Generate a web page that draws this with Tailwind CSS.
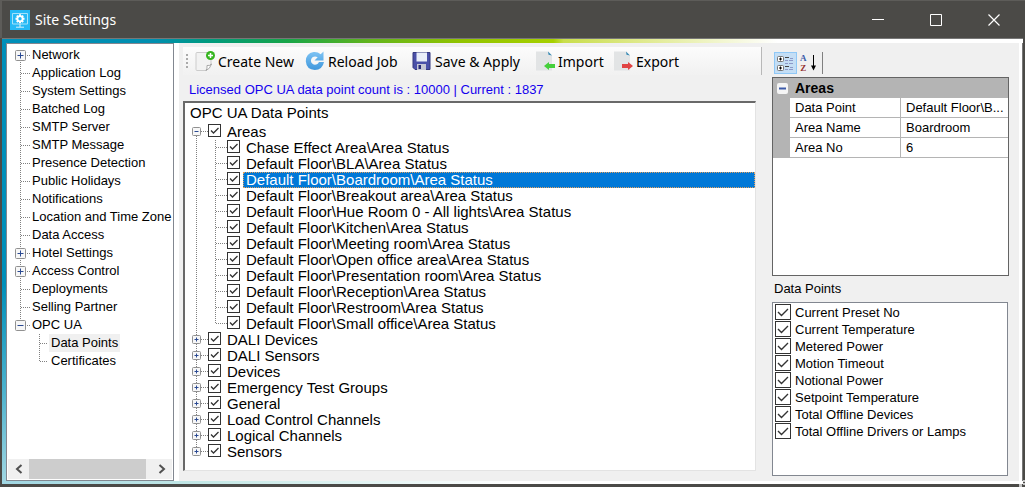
<!DOCTYPE html>
<html lang="en">
<head>
<meta charset="utf-8">
<title>Site Settings</title>
<script src="https://cdn.jsdelivr.net/npm/@tailwindcss/browser@4"></script>
</head>
<body class="flex min-h-screen flex-col bg-[#4b4a47] font-['Liberation_Sans',Arial,sans-serif] text-[13px] text-black">

<header class="flex h-[38px] shrink-0 items-center border-t border-l-2 border-[#5d5c59] pl-2 text-white">
  <svg class="size-5" viewBox="0 0 20 20" fill="none" aria-hidden="true">
    <rect width="20" height="20" fill="#25b9f5"/>
    <path d="M2.5 3.5h15v10.500h-15z" stroke="#a5e2fb"/>
    <path d="M10 14v3M6 17.200h8" stroke="#d5f2fd"/>
    <path d="M10 4.300v9M5.500 8.800h9M6.800 5.600l6.400 6.400M13.200 5.600l-6.400 6.400" stroke="#fff" stroke-width="2"/>
    <circle cx="10" cy="8.800" r="2.600" fill="#25b9f5" stroke="#fff" stroke-width="1.800"/>
  </svg>
  <h1 class="ml-[5px] flex-1 font-['Noto_Sans','Open_Sans',sans-serif] text-[14px]">Site Settings</h1>
  <button class="grid h-9 w-[58px] place-items-center" aria-label="Minimize"><svg width="12" height="12" stroke="#fff"><path d="M0 5.500h12"/></svg></button>
  <button class="grid h-9 w-[58px] place-items-center" aria-label="Maximize"><svg width="12" height="12" stroke="#fff" fill="none"><path d="M.5.5h11v11h-11z"/></svg></button>
  <button class="mr-[2px] grid h-9 w-[58px] place-items-center" aria-label="Close"><svg width="12" height="12" stroke="#fff" stroke-width="1.200"><path d="M.5.5l11 11M11.500.5l-11 11"/></svg></button>
</header>

<div class="mr-[2px] mb-[3px] ml-[2px] flex flex-1 flex-col">
  <div class="h-[5px] shrink-0 border-t border-[#777] bg-[linear-gradient(90deg,#008fb9_0%,#008fb0_15%,#009a80_20%,#18a548_28%,#62b41c_36%,#92c400_45%,#a6d000_54%,#c9de4c_55%,#e0ea90_63%,#fff_76%)]"></div>
  <div class="flex flex-1">
    <div class="w-1 shrink-0 bg-[linear-gradient(180deg,#008fb9_0%,#008fb9_55%,#4fb3cd_80%,#a0d6e2_100%)]"></div>

    <nav class="flex w-[168px] shrink-0 flex-col border border-[#828790] bg-white" aria-label="Settings sections">
      <ul id="sections" class="flex-1 overflow-hidden pt-[2px]"></ul>
      <div class="m-px flex h-5 bg-[#f0f0f0]">
        <button class="grid w-[21px] place-items-center" aria-label="Scroll left"><svg width="8" height="10" fill="none" stroke="#505050" stroke-width="2"><path d="M6.500 1L2 5l4.500 4"/></svg></button>
        <div class="flex-1"><div class="h-full w-[96%] bg-[#cdcdcd]"></div></div>
        <button class="grid w-[21px] place-items-center" aria-label="Scroll right"><svg width="8" height="10" fill="none" stroke="#505050" stroke-width="2"><path d="M1.500 1L6 5 1.500 9"/></svg></button>
      </div>
    </nav>
    <div class="w-[5px] shrink-0 bg-white"></div>

    <main class="flex min-w-0 flex-1 bg-[#f0f0f0] pt-1">
      <section class="flex min-w-0 flex-1 flex-col pl-1">
        <div role="toolbar" aria-label="Data point actions" class="flex h-[28px] items-center border-r border-[#b8b8b8] bg-gradient-to-b from-[#fcfcfc] to-[#f1f1f1] pl-[3px] font-['Noto_Sans','Open_Sans',sans-serif] text-[14px]">
          <svg class="mr-[6px]" width="3" height="16" stroke="#aaa" stroke-width="2" stroke-dasharray="2 2"><path d="M1 1v14"/></svg>
          <button class="flex w-[110px] items-center gap-[3px] whitespace-nowrap">
            <svg width="20" height="20" viewBox="0 0 20 20"><path d="M2 1.500h14v12l-5 6H2q-1 0-1-1v-16q0-1 1-1z" fill="#f2f2f2" stroke="#ccc"/><path d="M11 19.500q1.500-2 1-5 3 .5 4.500-1.500-1.500 5-5.500 6.500z" fill="#fff" stroke="#888" stroke-width=".7"/><circle cx="15.500" cy="4.500" r="4.500" fill="#36b51f"/><path d="M15.500 2v5M13 4.500h5" stroke="#fff" stroke-width="1.500"/></svg>
            Create New</button>
          <button class="flex w-[107px] items-center gap-[3px] whitespace-nowrap">
            <svg width="20" height="20" viewBox="0 0 20 20"><defs><linearGradient id="reload" x2="0" y2="1"><stop stop-color="#7fc4f4"/><stop offset="1" stop-color="#3f97dc"/></linearGradient></defs><path d="M18.500.5v9h-9l3.200-3.200Q10 4.500 7.500 6.300 5 9 6.500 11.800q2.500 3.400 6.300.9l1.200-1.700h5Q17.500 18.800 9.800 19 1.500 18.500.8 10.200 1 2.200 8.500 1q4-.5 7.200 2.200z" fill="url(#reload)"/></svg>
            Reload Job</button>
          <button class="flex w-[123px] items-center gap-[3px] whitespace-nowrap">
            <svg width="20" height="20" viewBox="0 0 20 20"><path d="M1 1.500h17v17H3l-2-2z" fill="#4a50a8" stroke="#34387f"/><path d="M4.500 1.500h10.500v9H4.500z" fill="#e9eef8"/><path d="M5 13h9v6H5z" fill="#c6c7d4"/><path d="M6.500 14h2.500v4H6.500z" fill="#272b78"/></svg>
            Save &amp; Apply</button>
          <button class="flex w-[78px] items-center gap-[3px] whitespace-nowrap">
            <svg width="20" height="20" viewBox="0 0 20 20"><path d="M1 .5h12l4 4v15H1z" fill="#e2e4e5"/><path d="M13 .5l4 4-3.500-.8z" fill="#398bb5"/><path d="M9 15l5-4v2h6v4h-6v2z" fill="#44cf3b"/></svg>
            Import</button>
          <button class="flex items-center gap-[3px] whitespace-nowrap">
            <svg width="20" height="20" viewBox="0 0 20 20"><path d="M1 .5h12l4 4v15H1z" fill="#e2e4e5"/><path d="M13 .5l4 4-3.500-.8z" fill="#398bb5"/><path d="M20 15l-5-4v2H9v4h6v2z" fill="#e04343"/></svg>
            Export</button>
        </div>
        <p class="pt-[7px] pb-[3px] pl-[6px] leading-[16px] text-[#1400ee]">Licensed OPC UA data point count is : 10000 | Current : 1837</p>
        <div class="mr-[6px] mb-[10px] flex-1 border border-t-2 border-l-2 border-[#e3e3e3] border-t-[#696969] border-l-[#696969] bg-white">
          <h2 class="h-[21px] pt-px pl-[5px] text-[15px] leading-[18px]">OPC UA Data Points</h2>
          <ul id="points"></ul>
        </div>
      </section>

      <aside class="mr-[10px] flex w-[247px] shrink-0 flex-col pl-[10px]">
        <div role="toolbar" aria-label="Property view" class="mt-[5px] flex h-[25px] items-start pl-[2px]">
          <button class="grid h-[22px] w-[23px] place-items-center border border-[#90c8f6] bg-[#c4def5]" aria-label="Categorized">
            <svg width="17" height="17" fill="none"><rect x=".5" y="1.500" width="6" height="5" rx="1" fill="#fff" stroke="#777"/><rect x=".5" y="10.500" width="6" height="5" rx="1" fill="#fff" stroke="#777"/><path d="M2 4h3M3.500 2.500v3M2 13h3M3.500 11.500v3" stroke="#000"/><path d="M8 2.500h4M8 11.500h4" stroke="#444"/><path d="M8 5.500h3m1 0h4M8 8.500h3m1 0h4M8 14.500h3m1 0h4M13 3.500h3M13 12.500h3" stroke="#8c98c8"/></svg>
          </button>
          <button class="flex h-[22px] w-[25px] items-center pl-[3px]" aria-label="Alphabetical">
            <span class="flex flex-col font-['Liberation_Serif',serif] text-[9px] leading-[10px] font-bold"><span class="text-[#3a5ba8]">A</span><span class="text-[#963232]">Z</span></span>
            <svg class="ml-[3px]" width="7" height="16"><path d="M3.500 0v13" stroke="#000"/><path d="M1 10.500h5l-2.500 5z"/></svg>
          </button>
          <div class="h-[22px] w-px bg-[#808080]"></div>
        </div>

        <div class="h-[199px] border border-[#646464] bg-white">
          <table class="w-full table-fixed border-separate border-spacing-0 text-left">
            <colgroup><col class="w-[17px]"><col class="w-[111px]"><col></colgroup>
            <thead><tr class="h-5 bg-[#b4b4b4]">
              <th class="p-0"><button class="ml-[4px] grid size-[11px] place-items-center rounded-[2px] bg-[#f5f5f5]" aria-label="Collapse Areas"><svg width="9" height="9"><path d="M1 4.500h7" stroke="#3c5aa8" stroke-width="2"/></svg></button></th>
              <th colspan="2" class="p-0 pl-[5px] text-[14px] leading-[18px]">Areas</th>
            </tr></thead>
            <tbody id="props"></tbody>
          </table>
        </div>

        <h2 id="dp-title" class="mt-[5px] pl-[2px] leading-[16px]">Data Points</h2>
        <ul id="checks" aria-labelledby="dp-title" class="mt-[5px] mr-px mb-[5px] flex-1 border border-[#828790] bg-white pt-px pl-[2px]"></ul>
      </aside>
    </main>
    <div class="w-[3px] shrink-0 bg-white"></div>
    <div class="w-px shrink-0 bg-[#777]"></div>
  </div>
  <div class="h-[3px] shrink-0 bg-[linear-gradient(90deg,#a0d6e2_0%,#c4e8e6_20%,#fff_50%)]"></div>
</div>
<svg class="fixed right-0 bottom-0" width="6" height="7" fill="#c4c4c4" aria-hidden="true"><path d="M4 0h2v2H4zM4 3h2v2H4zM0 4h3v3H0z"/></svg>

<script>
// Settings navigation: [label, kind, level]; kind is plus, minus or leaf.
const sections = [
  ['Network','plus',0],['Application Log','leaf',0],['System Settings','leaf',0],['Batched Log','leaf',0],
  ['SMTP Server','leaf',0],['SMTP Message','leaf',0],['Presence Detection','leaf',0],['Public Holidays','leaf',0],
  ['Notifications','leaf',0],['Location and Time Zone','leaf',0],['Data Access','leaf',0],['Hotel Settings','plus',0],
  ['Access Control','plus',0],['Deployments','leaf',0],['Selling Partner','leaf',0],['OPC UA','minus',0],
  ['Data Points','leaf',1],['Certificates','leaf',1]
];
const line = d => `<path d="${d}" stroke="#808080" stroke-dasharray="1 1"/>`;
const box = (x, y, s, kind) => {
  const c = s / 2, r = s / 2 - 2.5;
  return `<rect x="${x + .5}" y="${y + .5}" width="${s - 1}" height="${s - 1}" rx="1" fill="#f7f7f7" stroke="#919191"/>` +
    `<path d="M${x + c - r} ${y + c}h${2 * r}${kind === 'plus' ? `M${x + c} ${y + c - r}v${2 * r}` : ''}" stroke="#2b4a92"/>`;
};
document.getElementById('sections').innerHTML = sections.map(([label, kind, level], i) => {
  let art = '', last = i === sections.length - 1;
  if (level) art = line(`M32.5 0v${last ? 10 : 18}`) + line('M33 9.500h8');
  else {
    art = line(`M13.5 ${i ? 0 : 10}v${kind === 'minus' ? 9 : i ? 18 : 8}`) + line('M14 9.500h9');
    if (kind !== 'leaf') art += box(8, 4, 11, kind);
  }
  return `<li class="flex h-[18px] items-center whitespace-nowrap">
    <svg class="shrink-0" width="${level ? 42 : 23}" height="18" fill="none">${art}</svg>
    <a href="#" class="${label === 'Data Points' ? 'bg-[#f0f0f0] px-[2px] leading-[18px]' : 'px-[2px] leading-[18px]'}">${label}</a></li>`;
}).join('');

const tick = size => size === 13
  ? `<svg class="pointer-events-none absolute inset-0 hidden peer-checked:block" width="13" height="13" fill="none"><path d="M3 6.500l2.500 2.500L10.500 4" stroke="#333" stroke-width="1.300"/></svg>`
  : `<svg class="pointer-events-none absolute inset-0 hidden peer-checked:block" width="16" height="16" fill="none"><path d="M3 8l3.500 3.500L13 5" stroke="#333" stroke-width="1.400"/></svg>`;

// Data point tree with one expanded group.
const points = [['Areas','minus',0],
  ...['Chase Effect Area','Default Floor\\BLA','Default Floor\\Boardroom','Default Floor\\Breakout area',
    'Default Floor\\Hue Room 0 - All lights','Default Floor\\Kitchen','Default Floor\\Meeting room',
    'Default Floor\\Open office area','Default Floor\\Presentation room','Default Floor\\Reception',
    'Default Floor\\Restroom','Default Floor\\Small office'].map(n => [n + '\\Area Status','leaf',1]),
  ...['DALI Devices','DALI Sensors','Devices','Emergency Test Groups','General','Load Control Channels',
    'Logical Channels','Sensors'].map(n => [n,'plus',0])];
document.getElementById('points').innerHTML = points.map(([label, kind, level], i) => {
  const end = i === points.length - 1;
  let art = line(`M11.5 ${i ? 0 : 8}v${end || !i ? 8 : 16}`);
  if (level) art += line(`M30.5 0v${i === 12 ? 8 : 16}`) + line('M31 7.500h11');
  else art += line('M12 7.500h11') + box(7, 3, 9, kind);
  const sel = label.includes('Boardroom');
  return `<li><label class="flex h-4 items-start whitespace-nowrap">
    <svg class="shrink-0" width="${level ? 42 : 23}" height="16" fill="none">${art}</svg>
    <span class="relative size-[13px] shrink-0"><input type="checkbox" checked class="peer block size-[13px] appearance-none border border-[#333] bg-white">${tick(13)}</span>
    <span class="${sel ? 'ml-[3px] h-4 flex-1 bg-[#0078d7] pl-[3px] text-[15px] leading-[16px] text-white outline-1 -outline-offset-1 outline-dotted outline-[#e0a060]' : 'ml-[3px] h-4 flex-1 pl-[3px] text-[15px] leading-[16px]'}">${label}</span></label></li>`;
}).join('');

document.getElementById('props').innerHTML = [['Data Point','Default Floor\\B...'],['Area Name','Boardroom'],['Area No','6']]
  .map(([k, v]) => `<tr class="h-5"><td class="bg-[#b4b4b4] p-0"></td>
    <th class="border-r border-b border-[#b4b4b4] p-0 pl-[5px] leading-[18px] font-normal">${k}</th>
    <td class="border-b border-[#b4b4b4] p-0 pl-[5px] leading-[18px] whitespace-nowrap">${v}</td></tr>`).join('');

document.getElementById('checks').innerHTML = ['Current Preset No','Current Temperature','Metered Power','Motion Timeout',
  'Notional Power','Setpoint Temperature','Total Offline Devices','Total Offline Drivers or Lamps']
  .map(n => `<li><label class="flex h-[17px] items-start gap-1 leading-[17px]">
    <span class="relative size-4 shrink-0"><input type="checkbox" checked class="peer block size-4 appearance-none border border-[#333] bg-white">${tick(16)}</span>${n}</label></li>`).join('');
</script>
</body>
</html>
